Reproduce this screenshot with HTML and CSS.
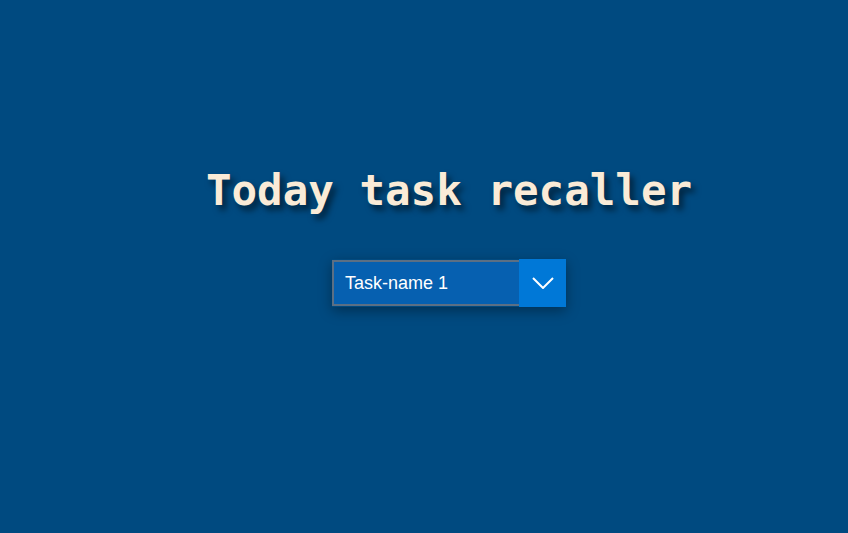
FILE: index.html
```html
<!DOCTYPE html>
<html lang="en">
<head>
<meta charset="utf-8">
<title>Today task recaller</title>
<link rel="stylesheet" href="styles.css">
</head>
<body>
<main class="app">
  <h1 class="title">Today task recaller</h1>
  <div class="select">
    <div class="select-value">Task-name 1</div>
    <div class="select-button">
      <svg width="22" height="12" viewBox="0 0 22 12" aria-hidden="true">
        <path d="M1 1 L11 11 L21 1" fill="none" stroke="#ffffff" stroke-width="2"/>
      </svg>
    </div>
  </div>
</main>
</body>
</html>
```
FILE: styles.css
```css
html, body {
  margin: 0;
  padding: 0;
  height: 100%;
}
body {
  background: #004a80;
}
.app {
  display: flex;
  flex-direction: column;
  align-items: center;
  padding-top: 160px;
  padding-left: 50px;
}
.title {
  margin: 0;
  font-family: "DejaVu Sans Mono", monospace;
  font-weight: bold;
  font-size: 42.5px;
  line-height: 62px;
  color: #faebd7;
  text-shadow: 4px 5px 6px rgba(0, 0, 0, 0.55);
}
.select {
  margin-top: 37px;
  display: flex;
  align-items: stretch;
  box-shadow: 0 4px 12px rgba(0, 0, 0, 0.35);
}
.select-value {
  width: 174px;
  height: 42px;
  padding-left: 11px;
  border: 2px solid #5b6f84;
  border-right: none;
  background: #0660b0;
  color: #ffffff;
  font-family: "Liberation Sans", Arial, sans-serif;
  font-size: 18px;
  line-height: 43px;
  margin-top: 1px;
  margin-bottom: 1px;
}
.select-button {
  width: 47px;
  height: 48px;
  background: #0078d7;
  display: flex;
  align-items: center;
  justify-content: center;
}
```
